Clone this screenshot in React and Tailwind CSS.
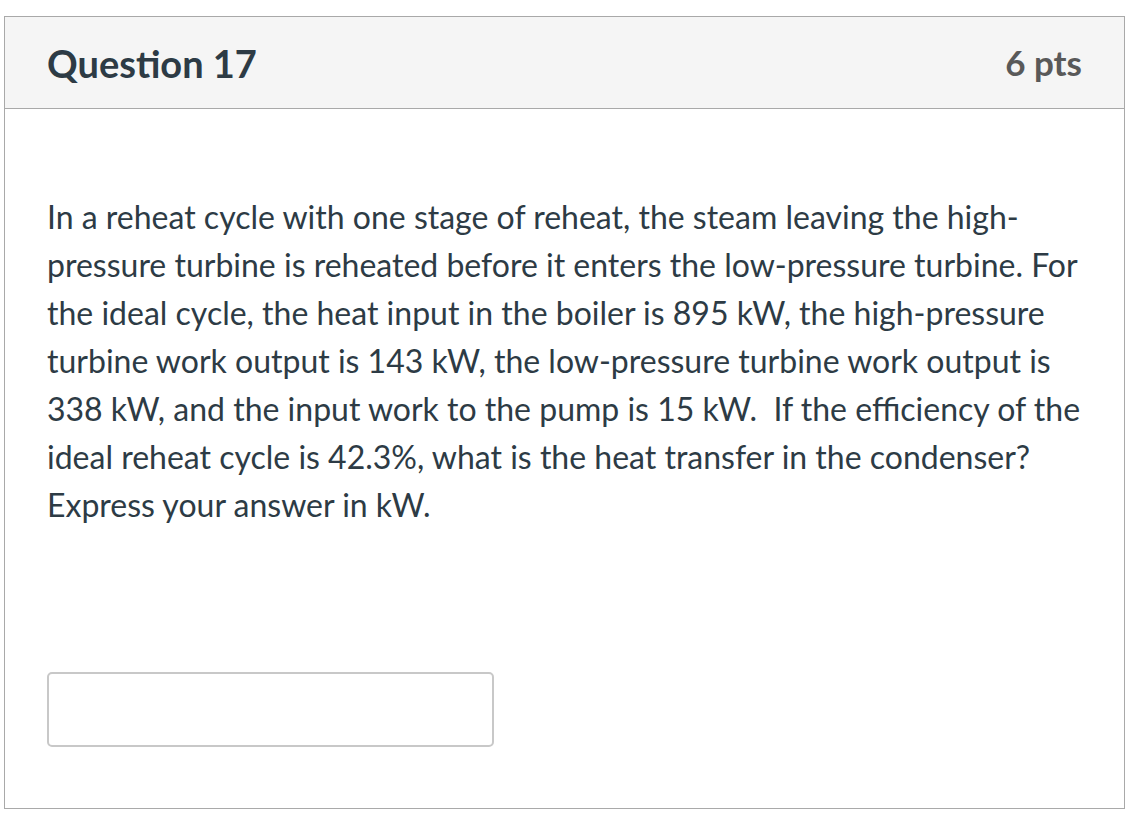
export default function App() {
  return (
    <div className="min-h-screen bg-white pt-4 pl-1 pr-[3px]" style={{ fontFamily: 'Lato, "Open Sans", sans-serif' }}>
      <div className="border border-[#a9a9a9] h-[793px] flex flex-col">
        {/* header */}
        <div className="bg-[#f5f5f5] border-b border-[#a9a9a9] h-[92px] flex items-center justify-between px-[42px]">
          <h2 className="text-[38px] font-bold text-[#2d3b45] leading-none">Question 17</h2>
          <span className="text-[35px] font-bold text-[#595959] leading-none">6 pts</span>
        </div>

        {/* body */}
        <div className="px-[42px] pt-[84px]">
          <p className="text-[32px] leading-[48px] text-[#2d3b45]">
            In a reheat cycle with one stage of reheat, the steam leaving the high-pressure turbine is reheated before it enters the low-pressure turbine. For the ideal cycle, the heat input in the boiler is 895 kW, the high-pressure turbine work output is 143 kW, the low-pressure turbine work output is 338 kW, and the input work to the pump is 15 kW.{'\u00a0'} If the efficiency of the ideal reheat cycle is 42.3%, what is the heat transfer in the condenser? Express your answer in kW.
          </p>
          <input
            type="text"
            className="mt-[143px] w-[447px] h-[75px] border-2 border-[#c8c8c8] rounded-[5px] bg-white outline-none"
          />
        </div>
      </div>
    </div>
  )
}
